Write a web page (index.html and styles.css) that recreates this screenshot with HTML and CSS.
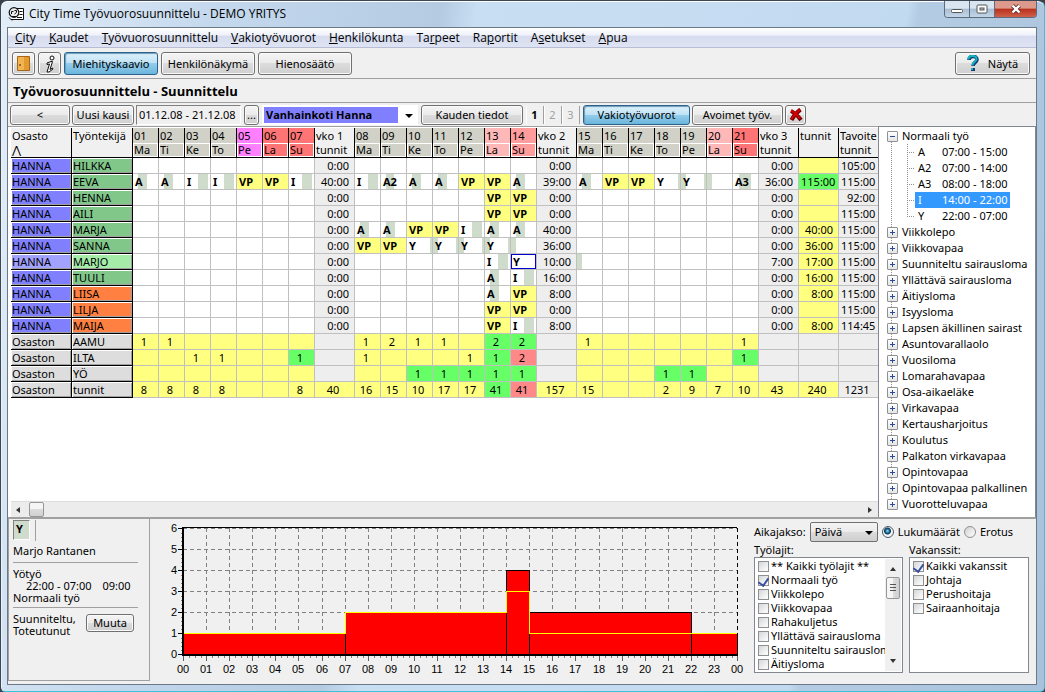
FILE: index.html
```html
<!DOCTYPE html>
<html lang="fi">
<head>
    <meta charset="UTF-8">
    <meta name="viewport" content="width=device-width, initial-scale=1.0">
    <title>City Time Työvuorosuunnittelu - DEMO YRITYS</title>
    <link rel="stylesheet" href="styles.css">
</head>
<body>
<div class="window">
    <header class="titlebar">
        <svg class="app-icon" width="16" height="14" viewBox="0 0 16 14">
            <path d="M8 1.500h7.500v11H3" fill="#fff" stroke="#111"/>
            <circle cx="6" cy="5.500" r="4.800" fill="#eee" stroke="#111" stroke-width="1.200"/>
            <path d="M3.500 7V4.500h2M6.500 3.500h2v2l-2 1.500M4 9.500h4" fill="none" stroke="#111"/>
            <path d="M1 10.500l3 3M11.500 4.500h3M11.500 7.500h3M9 10.500h5" stroke="#111"/>
        </svg>
        <h1>City Time Työvuorosuunnittelu - DEMO YRITYS</h1>
        <div class="window-buttons">
            <button type="button" aria-label="Pienennä"><svg width="12" height="12"><rect x=".5" y="6.500" width="11" height="3" rx="1" fill="#fff" stroke="#555"/></svg></button>
            <button type="button" aria-label="Palauta"><svg width="12" height="12"><rect x="1" y="2" width="10" height="8" rx="1" fill="#fff" stroke="#555"/><rect x="4" y="5" width="4" height="2" fill="#bcd" stroke="#555"/></svg></button>
            <button type="button" class="close" aria-label="Sulje"><svg width="12" height="12"><path d="M2.500 2.500l7 7M9.500 2.500l-7 7" stroke="#5a2a2a" stroke-width="4"/><path d="M2.500 2.500l7 7M9.500 2.500l-7 7" stroke="#fff" stroke-width="2.400"/></svg></button>
        </div>
    </header>

    <div class="client">
        <nav class="menu">
            <a href="#"><u>C</u>ity</a>
            <a href="#"><u>K</u>audet</a>
            <a href="#"><u>T</u>yövuorosuunnittelu</a>
            <a href="#"><u>V</u>akiotyövuorot</a>
            <a href="#"><u>H</u>enkilökunta</a>
            <a href="#">Ta<u>r</u>peet</a>
            <a href="#">Ra<u>p</u>ortit</a>
            <a href="#">A<u>s</u>etukset</a>
            <a href="#"><u>A</u>pua</a>
        </nav>

        <div class="toolbar">
            <button type="button" class="btn icon-btn" aria-label="Poistu">
                <svg width="13" height="16" viewBox="0 0 13 16"><path d="M.500.500h12v14H.500z" fill="#e39a2e" stroke="#a8651a"/><path d="M1 1h6v13H1z" fill="#f0b452"/><circle cx="3" cy="9" r="1" fill="#8a4d10"/></svg>
            </button>
            <button type="button" class="btn icon-btn" aria-label="Tiedot">
                <svg width="12" height="18" viewBox="0 0 12 18"><path d="M3 8l4-1.500h1.500L6 14.500l2.500-1.500.500 1-4 3H3L5.500 9 3 9.500z" fill="#fff" stroke="#111"/><circle cx="8" cy="3" r="2" fill="#fff" stroke="#111"/></svg>
            </button>
            <button type="button" class="btn view-btn active">Miehityskaavio</button>
            <button type="button" class="btn view-btn">Henkilönäkymä</button>
            <button type="button" class="btn view-btn">Hienosäätö</button>
            <button type="button" class="btn help-btn">
                <svg width="12" height="17" viewBox="0 0 12 17"><path d="M2 5c0-5 8-4.500 8-.500 0 3-4 2.500-4 6.500" fill="none" stroke="#123c70" stroke-width="3.600"/><path d="M1.500 4.500c0-5 8-4.500 8-.500 0 3-4 2.500-4 6.500" fill="none" stroke="#11b5c4" stroke-width="2"/><path d="M4 13h4v3H4z" fill="#123c70"/><path d="M4 13h2v2H4z" fill="#11b5c4"/></svg>
                Näytä
            </button>
        </div>

        <h2>Työvuorosuunnittelu - Suunnittelu</h2>

        <div class="controls">
            <button type="button" class="btn prev-btn">&lt;</button>
            <button type="button" class="btn new-btn">Uusi kausi</button>
            <input class="period" type="text" value="01.12.08 - 21.12.08" aria-label="Kausi">
            <button type="button" class="btn dots-btn">...</button>
            <div class="combo unit">
                <select aria-label="Osasto"><option>Vanhainkoti Hanna</option></select>
            </div>
            <button type="button" class="btn info-btn">Kauden tiedot</button>
            <div class="pages">
                <button type="button">1</button>
                <button type="button" disabled>2</button>
                <button type="button" disabled>3</button>
            </div>
            <button type="button" class="btn shifts-btn active">Vakiotyövuorot</button>
            <button type="button" class="btn open-btn">Avoimet työv.</button>
            <button type="button" class="btn delete-btn" aria-label="Poista">
                <svg width="14" height="14" viewBox="0 0 14 14"><path d="M2 3c4 2 7 5 10 9M11.500 1.500C8 4 5 7 2.500 12" fill="none" stroke="#700" stroke-width="4"/><path d="M2 2.500c4 2 6 4 9 8M11 1.500C8 4 5 7 2.500 11" fill="none" stroke="#d40000" stroke-width="2"/></svg>
            </button>
        </div>

        <main class="work">
            <section class="grid-pane">
                <table class="roster">
                    <colgroup id="cols"></colgroup>
                    <thead><tr id="head"></tr></thead>
                    <tbody id="rows"></tbody>
                </table>
                <div class="hscroll">
                    <span class="arrow-left"></span>
                    <span class="thumb"></span>
                    <span class="arrow-right"></span>
                </div>
            </section>
            <aside class="tree">
                <ul>
                    <li class="open"><span class="node">Normaali työ</span>
                        <ul class="shifts">
                            <li><span class="shift"><b>A</b>07:00 - 15:00</span></li>
                            <li><span class="shift"><b>A2</b>07:00 - 14:00</span></li>
                            <li><span class="shift"><b>A3</b>08:00 - 18:00</span></li>
                            <li><span class="shift selected"><b>I</b>14:00 - 22:00</span></li>
                            <li><span class="shift"><b>Y</b>22:00 - 07:00</span></li>
                        </ul>
                    </li>
                    <li><span class="node">Viikkolepo</span></li>
                    <li><span class="node">Viikkovapaa</span></li>
                    <li><span class="node">Suunniteltu sairausloma</span></li>
                    <li><span class="node">Yllättävä sairausloma</span></li>
                    <li><span class="node">Äitiysloma</span></li>
                    <li><span class="node">Isyysloma</span></li>
                    <li><span class="node">Lapsen äkillinen sairast</span></li>
                    <li><span class="node">Asuntovarallaolo</span></li>
                    <li><span class="node">Vuosiloma</span></li>
                    <li><span class="node">Lomarahavapaa</span></li>
                    <li><span class="node">Osa-aikaeläke</span></li>
                    <li><span class="node">Virkavapaa</span></li>
                    <li><span class="node">Kertausharjoitus</span></li>
                    <li><span class="node">Koulutus</span></li>
                    <li><span class="node">Palkaton virkavapaa</span></li>
                    <li><span class="node">Opintovapaa</span></li>
                    <li><span class="node">Opintovapaa palkallinen</span></li>
                    <li><span class="node">Vuorotteluvapaa</span></li>
                </ul>
            </aside>
        </main>

        <footer class="bottom">
            <section class="details">
                <div class="code-row"><span class="code">Y</span></div>
                <p class="person">Marjo Rantanen</p>
                <div class="shift-info">
                    <p>Yötyö</p>
                    <p class="times"><span>22:00 - 07:00</span><span>09:00</span></p>
                    <p>Normaali työ</p>
                </div>
                <div class="state">
                    <p>Suunniteltu,<br>Toteutunut</p>
                    <button type="button" class="btn">Muuta</button>
                </div>
            </section>

            <section class="chart">
                <svg id="chart" width="594" height="160" viewBox="150 520 594 160"></svg>
            </section>

            <section class="filters">
                <div class="range">
                    <label for="span">Aikajakso:</label>
                    <div class="combo span">
                        <select id="span"><option>Päivä</option></select>
                    </div>
                    <label><input type="radio" name="mode" checked>Lukumäärät</label>
                    <label><input type="radio" name="mode">Erotus</label>
                </div>
                <div class="lists">
                    <div class="list-col types">
                        <h3>Työlajit:</h3>
                        <div class="list">
                            <div class="items">
                                <label><input type="checkbox">** Kaikki työlajit **</label>
                                <label><input type="checkbox" checked>Normaali työ</label>
                                <label><input type="checkbox">Viikkolepo</label>
                                <label><input type="checkbox">Viikkovapaa</label>
                                <label><input type="checkbox">Rahakuljetus</label>
                                <label><input type="checkbox">Yllättävä sairausloma</label>
                                <label><input type="checkbox">Suunniteltu sairausloma</label>
                                <label><input type="checkbox">Äitiysloma</label>
                            </div>
                            <div class="vscroll">
                                <span class="arrow-up"></span>
                                <span class="thumb"></span>
                                <span class="arrow-down"></span>
                            </div>
                        </div>
                    </div>
                    <div class="list-col posts">
                        <h3>Vakanssit:</h3>
                        <div class="list">
                            <div class="items">
                                <label><input type="checkbox" checked>Kaikki vakanssit</label>
                                <label><input type="checkbox">Johtaja</label>
                                <label><input type="checkbox">Perushoitaja</label>
                                <label><input type="checkbox">Sairaanhoitaja</label>
                            </div>
                        </div>
                    </div>
                </div>
            </section>
        </footer>
    </div>
</div>
<script src="script.js"></script>
</body>
</html>
```
FILE: styles.css
```css
* {
    box-sizing: border-box;
}
body {
    margin: 0;
    background: #3a3f48;
    font-family: "Noto Sans", "Open Sans", sans-serif;
    font-size: 11px;
    line-height: 14px;
    color: #000;
}
h1, h2, h3, p, ul {
    margin: 0;
    padding: 0;
}
button, input, select {
    font: inherit;
    color: inherit;
    margin: 0;
}
ul {
    list-style: none;
}

/* window frame */
.window {
    display: flex;
    flex-direction: column;
    min-height: 100vh;
    padding: 0 7px 6px 6px;
    border: 1px solid #3c4654;
    border-right-color: #35c4dc;
    border-bottom-color: #35c4dc;
    border-radius: 7px 7px 5px 5px;
    background: linear-gradient(100deg, #e4eef8 0, #c5d9ee 18%, #b4cbe2 38%, #c8def3 41%, #c2daf0 78%, #b4cce3 79%, #a8c2dc 100%);
    box-shadow: inset 0 1px #fff, inset 1px 0 #e8f2fa;
}
.titlebar {
    display: flex;
    align-items: flex-start;
    height: 26px;
}
.app-icon {
    margin: 6px 5px 0 1px;
}
.titlebar h1 {
    flex: 1;
    font-family: "Open Sans", "Noto Sans", sans-serif;
    font-size: 12px;
    font-weight: normal;
    line-height: 26px;
}
.window-buttons {
    display: flex;
    border: 1px solid #5b6b80;
    border-top: 0;
    border-radius: 0 0 4px 4px;
    overflow: hidden;
}
.window-buttons button {
    display: grid;
    place-items: center;
    width: 25px;
    height: 16px;
    padding: 0;
    border: 0;
    border-right: 1px solid #5b6b80;
    background: linear-gradient(#d9e6f2 45%, #a9bed4 50%, #c3d6e8);
}
.window-buttons .close {
    width: 41px;
    border-right: 0;
    background: linear-gradient(#dd9a8c 45%, #b8301c 50%, #d0604a);
}
.client {
    display: flex;
    flex: 1;
    flex-direction: column;
    border: 1px solid #6b7885;
    background: #f0f0f0;
}

/* menu and toolbars */
.menu {
    display: flex;
    gap: 13px;
    height: 20px;
    padding: 0 7px;
    border-bottom: 1px solid #b8bcd4;
    background: linear-gradient(#fff 0, #eef1f9 38%, #d6dcee 42%, #dfe4f4 100%);
    font-family: "Open Sans", "Noto Sans", sans-serif;
    font-size: 12px;
    line-height: 20px;
}
.menu a {
    color: #000;
    text-decoration: none;
}
.btn {
    display: flex;
    align-items: center;
    justify-content: center;
    flex-shrink: 0;
    height: 20px;
    padding: 0;
    border: 1px solid #707070;
    border-radius: 3px;
    background: linear-gradient(#f4f4f4, #ebebeb 48%, #dcdcdc 50%, #cfcfcf);
    box-shadow: inset 0 0 0 1px #fafafa;
    white-space: nowrap;
}
.btn.active {
    border-color: #2c628b;
    background: linear-gradient(#dff1fb, #bfe2f5 48%, #94cdec 50%, #6bb5dc);
    box-shadow: inset 1px 1px 1px #6a9cba;
}
.toolbar {
    display: flex;
    gap: 3px;
    height: 31px;
    padding: 4px 6px 3px 4px;
    border-bottom: 1px solid #a0a0a0;
}
.toolbar .btn {
    height: 23px;
}
.toolbar .icon-btn {
    width: 23px;
}
.view-btn {
    width: 94px;
}
.toolbar .help-btn {
    gap: 9px;
    width: 75px;
    margin-left: auto;
}
h2 {
    height: 24px;
    padding-left: 5px;
    border-bottom: 1px solid #a0a0a0;
    font-family: "Open Sans", "Noto Sans", sans-serif;
    font-size: 13px;
    line-height: 24px;
}
.controls {
    display: flex;
    align-items: center;
    gap: 2px;
    height: 23px;
    padding-left: 2px;
}
.prev-btn {
    width: 60px;
}
.new-btn {
    width: 62px;
}
.period {
    width: 105px;
    height: 20px;
    margin-right: 1px;
    padding: 0 2px;
    border: 1px solid #fff;
    border-top-color: #808080;
    border-left-color: #808080;
    background: #f0f0f0;
}
.dots-btn {
    width: 15px;
}
.combo {
    position: relative;
}
.combo select {
    appearance: none;
    width: 100%;
    height: 20px;
    padding: 0 4px;
    border: 0;
    border-radius: 0;
}
.combo::after {
    content: "";
    position: absolute;
    top: 9px;
    right: 5px;
    border: 4px solid transparent;
    border-top-color: #000;
    border-bottom: 0;
    pointer-events: none;
}
.unit {
    width: 156px;
    margin: 0 1px;
}
.unit select {
    background: linear-gradient(#8080ff, #8080ff) 2px 2px / calc(100% - 22px) 16px no-repeat #fff;
    font-family: "Open Sans", "Noto Sans", sans-serif;
    font-weight: bold;
}
.info-btn {
    width: 102px;
}
.pages {
    display: flex;
    margin: 0 1px;
}
.pages button {
    width: 18px;
    height: 18px;
    padding: 0;
    border: 0;
    border-right: 1px solid #a0a0a0;
    background: none;
    box-shadow: inset 1px 0 #fff;
    font-weight: bold;
}
.pages button:disabled {
    color: #a0a0a0;
    font-weight: normal;
}
.shifts-btn {
    width: 107px;
}
.open-btn {
    width: 91px;
}
.delete-btn {
    width: 21px;
}

/* roster */
.work {
    display: flex;
    flex: 1;
    min-height: 0;
}
.grid-pane {
    display: flex;
    flex: 1;
    flex-direction: column;
    min-width: 0;
    padding: 1px 0 0 3px;
    border-top: 1px solid #a0a0a0;
    background: #fff;
    overflow: hidden;
}
.roster {
    width: 868px;
    table-layout: fixed;
    border-spacing: 0;
    line-height: 15px;
    white-space: nowrap;
}
.roster th, .roster td {
    height: 16px;
    padding: 0 2px;
    border-right: 1px solid #c0c0c0;
    border-bottom: 1px solid #c0c0c0;
    overflow: hidden;
    text-align: left;
    font-weight: normal;
}
.roster thead th {
    height: 30px;
    padding: 0;
    border-color: #000;
    background: #f0f0f0;
    line-height: 14px;
    vertical-align: top;
}
.roster thead span {
    display: block;
    height: 15px;
    padding: 1px 1px 0;
}
.roster thead span + span {
    height: 14px;
    padding-top: 0;
}
.roster thead .day span + span {
    padding: 0;
    border: 1px solid #fff;
    line-height: 12px;
}
.roster .work-day {
    background: #d1d1c7;
}
.roster .holiday-eve {
    background: #ff80ff;
}
.roster .red-day {
    background: #ff7474;
}
.roster .sat {
    background: #ffb8b8;
}
.roster .sun {
    background: #ff9c9c;
}
.roster tbody th {
    padding: 0 1px;
    border-color: #000;
    background: #ddd;
    box-shadow: inset 1px 1px #fff, inset -1px -1px #a0a0a0;
}
.roster tbody .unit-cell {
    background: #8080ff;
}
.roster tbody .staff {
    background: #82c78a;
}
.roster tbody .temp {
    background: #ff8040;
}
.roster .current .unit-cell {
    background: #a2a2ff;
}
.roster .current .staff {
    background: #a4eca8;
}
.roster .code-cell {
    font-weight: bold;
}
.roster .shift-a {
    background: linear-gradient(#d0dccb, #d0dccb) 5px 0 / 9px 100% no-repeat;
}
.roster .shift-a2 {
    background: linear-gradient(#d0dccb, #d0dccb) 5px 0 / 8px 100% no-repeat;
}
.roster .shift-a3 {
    background: linear-gradient(#d0dccb, #d0dccb) 6px 0 / 12px 100% no-repeat;
}
.roster .shift-i {
    background: linear-gradient(#d0dccb, #d0dccb) 13px 0 / 10px 100% no-repeat;
}
.roster .shift-y {
    background: linear-gradient(#d0dccb, #d0dccb) right 0 top 0 / 2px 100% no-repeat;
}
.roster .after-y {
    background: linear-gradient(#d0dccb, #d0dccb) 0 0 / 5px 100% no-repeat;
}
.roster .shift-y.after-y {
    background: linear-gradient(90deg, #d0dccb 5px, transparent 5px, transparent calc(100% - 2px), #d0dccb calc(100% - 2px));
}
.roster .yellow {
    background: #ffff80;
}
.roster .green {
    background: #66ff66;
}
.roster .red {
    background: #ff8888;
}
.roster .cursor {
    background: #fff;
    box-shadow: inset 0 0 0 1px #0000d0;
}
.roster .sum {
    background-color: #eee;
    padding-right: 5px;
    text-align: right;
}
.roster .sum.yellow {
    background-color: #ffff80;
}
.roster .sum.green {
    background-color: #66ff66;
}
.roster .goal {
    padding-right: 4px;
    border-right: 0;
}
.roster .count {
    padding: 0 3px 0 0;
    text-align: center;
}
.hscroll {
    display: flex;
    align-items: center;
    height: 16px;
    margin-top: auto;
    padding: 0 6px 0 5px;
    border-top: 1px solid #ddd;
    background: #ececec;
}
.hscroll .thumb {
    width: 15px;
    height: 15px;
    margin: 0 auto 0 9px;
    border: 1px solid #979797;
    border-radius: 2px;
    background: linear-gradient(#f5f5f5 48%, #dcdcdc 50%, #d0d0d0);
}
.arrow-left, .arrow-right, .arrow-up, .arrow-down {
    border: 3px solid transparent;
}
.arrow-left {
    border-right: 4px solid #333;
    border-left: 0;
}
.arrow-right {
    border-left: 4px solid #333;
    border-right: 0;
}
.arrow-up {
    border-bottom: 4px solid #333;
    border-top: 0;
}
.arrow-down {
    border-top: 4px solid #333;
    border-bottom: 0;
}

/* absence tree */
.tree {
    width: 158px;
    flex-shrink: 0;
    padding: 1px 0 0 8px;
    border: 1px solid #828790;
    border-width: 1px 1px 0 1px;
    background: #fff;
    overflow: hidden;
}
.tree li {
    line-height: 16px;
    white-space: nowrap;
}
.node {
    display: flex;
    align-items: center;
    height: 16px;
}
.node::before {
    content: "";
    width: 9px;
    height: 9px;
    margin-right: 4px;
    border: 1px solid #919191;
    border-radius: 1px;
    background:
        linear-gradient(#2b4a9b, #2b4a9b) center / 5px 1px no-repeat,
        linear-gradient(#2b4a9b, #2b4a9b) center / 1px 5px no-repeat,
        linear-gradient(#fff, #e4e4e4);
}
.open > .node::before {
    background: linear-gradient(#2b4a9b, #2b4a9b) center / 5px 1px no-repeat, linear-gradient(#fff, #e4e4e4);
}
.tree > ul > li {
    background: repeating-linear-gradient(#909090 0 1px, transparent 1px 2px) 4px 0 / 1px 100% no-repeat;
}
.tree > ul > li:first-child {
    background-position: 4px 8px;
}
.tree > ul > li:last-child {
    background-size: 1px 8px;
}
.shifts li {
    display: flex;
    height: 16px;
    padding-left: 28px;
    background:
        repeating-linear-gradient(#909090 0 1px, transparent 1px 2px) 20px 0 / 1px 100% no-repeat,
        repeating-linear-gradient(90deg, #909090 0 1px, transparent 1px 2px) 20px 8px / 7px 1px no-repeat;
}
.shifts li:last-child {
    background-size: 1px 8px, 7px 1px;
}
.shift {
    display: flex;
    padding: 0 2px 0 3px;
}
.shift b {
    width: 24px;
    font-weight: normal;
}
.shift.selected {
    background: #3399ff;
    color: #fff;
}

/* bottom panel */
.bottom {
    display: flex;
    height: 167px;
    border-top: 2px solid #a0a0a0;
}
.details {
    width: 142px;
    margin-bottom: 3px;
    padding: 1px 11px 0 4px;
    border: 1px solid #a0a0a0;
    border-top: 0;
    line-height: 12px;
}
.code-row {
    display: flex;
    height: 21px;
}
.code {
    width: 17px;
    height: 20px;
    padding: 2px;
    border: 1px solid #fff;
    border-top-color: #808080;
    border-left-color: #808080;
    background: #d0dccb;
    font-weight: bold;
}
.code-row::after {
    content: "";
    margin-left: 5px;
    border-left: 1px solid #a0a0a0;
}
.person {
    padding: 4px 0 5px;
    border-bottom: 1px solid #a0a0a0;
}
.shift-info {
    padding: 5px 0 3px;
    border-bottom: 1px solid #a0a0a0;
}
.times {
    display: flex;
    gap: 11px;
    padding-left: 13px;
}
.state {
    display: flex;
    justify-content: space-between;
    padding: 5px 4px 0 0;
}
.state .btn {
    width: 48px;
    height: 18px;
    margin-top: 1px;
}
.chart {
    flex: 1;
    min-width: 0;
    padding-top: 1px;
    overflow: hidden;
}
#chart {
    display: block;
    font-size: 11px;
    font-family: "Liberation Sans", Arial, sans-serif;
}
.filters {
    width: 282px;
    flex-shrink: 0;
}
.range {
    display: flex;
    align-items: center;
    height: 25px;
}
.range label {
    display: flex;
    align-items: center;
    margin-right: 4px;
}
.span {
    width: 68px;
    margin-right: 4px;
}
.span select {
    border: 1px solid #707070;
    border-radius: 2px;
    background: linear-gradient(#f4f4f4, #ebebeb 48%, #dcdcdc 50%, #cfcfcf);
}
input[type="radio"] {
    appearance: none;
    width: 12px;
    height: 12px;
    margin-right: 4px;
    border: 1px solid #8e8f8f;
    border-radius: 50%;
    background: linear-gradient(135deg, #d0d0d0, #fff);
}
input[type="radio"]:checked {
    border-color: #4a5a68;
    background: radial-gradient(circle at 45% 40%, #8ee0f8 0, #1a6a9a 2px, #0c3350 3px, #f4f4f4 4px);
}
.lists {
    display: flex;
    gap: 6px;
}
.types {
    width: 149px;
}
.posts {
    width: 120px;
}
h3 {
    height: 13px;
    font-size: 11px;
    font-weight: normal;
    line-height: 11px;
}
.list {
    display: flex;
    height: 116px;
    padding: 1px;
    border: 1px solid #828790;
    background: #fff;
    overflow: hidden;
}
.items {
    flex: 1;
    min-width: 0;
    padding-left: 2px;
    overflow: hidden;
}
.items label {
    display: flex;
    align-items: center;
    height: 14px;
    white-space: nowrap;
}
input[type="checkbox"] {
    appearance: none;
    display: grid;
    justify-items: center;
    align-items: start;
    flex-shrink: 0;
    width: 11px;
    height: 11px;
    margin-right: 2px;
    border: 1px solid #8e8f8f;
    background: linear-gradient(135deg, #d4d6d8, #f8f8f8 80%);
}
input[type="checkbox"]:checked::before {
    content: "";
    width: 5px;
    height: 8px;
    border: solid #3a4fa0;
    border-width: 0 2px 2px 0;
    transform: rotate(35deg);
}
.vscroll {
    display: flex;
    flex-direction: column;
    align-items: center;
    width: 16px;
    padding: 8px 0;
    background: #f0f0f0;
}
.vscroll .thumb {
    width: 14px;
    height: 22px;
    margin: 6px 0 auto;
    border: 1px solid #979797;
    border-radius: 2px;
    background:
        repeating-linear-gradient(#555 0 1px, transparent 1px 3px) center / 6px 8px no-repeat,
        linear-gradient(90deg, #f5f5f5 48%, #dcdcdc 50%, #d0d0d0);
}
```
FILE: script.js
```javascript
const dayNames = ["Ma", "Ti", "Ke", "To", "Pe", "La", "Su"];
const dayStyles = {
    5: "holiday-eve", 6: "red-day", 7: "red-day",
    13: "sat", 14: "sun", 20: "sat", 21: "red-day"
};

// shifts: day number -> code, sums: three weeks, total, target
const people = [
    { name: "HILKKA", kind: "staff", shifts: {}, sums: ["0:00", "0:00", "0:00", "", "105:00"] },
    { name: "EEVA", kind: "staff", full: true, shifts: { 1: "A", 2: "A", 3: "I", 4: "I", 5: "VP", 6: "VP", 7: "I", 8: "I", 9: "A2", 10: "A", 11: "A", 12: "VP", 13: "VP", 14: "A", 15: "A", 16: "VP", 17: "VP", 18: "Y", 19: "Y", 21: "A3" }, sums: ["40:00", "39:00", "36:00", "115:00", "115:00"] },
    { name: "HENNA", kind: "staff", shifts: { 13: "VP", 14: "VP" }, sums: ["0:00", "0:00", "0:00", "", "92:00"] },
    { name: "AILI", kind: "staff", shifts: { 13: "VP", 14: "VP" }, sums: ["0:00", "0:00", "0:00", "", "115:00"] },
    { name: "MARJA", kind: "staff", shifts: { 8: "A", 9: "A", 10: "VP", 11: "VP", 12: "I", 13: "A", 14: "A" }, sums: ["0:00", "40:00", "0:00", "40:00", "115:00"] },
    { name: "SANNA", kind: "staff", shifts: { 8: "VP", 9: "VP", 10: "Y", 11: "Y", 12: "Y", 13: "Y" }, sums: ["0:00", "36:00", "0:00", "36:00", "115:00"] },
    { name: "MARJO", kind: "staff", current: 14, shifts: { 13: "I", 14: "Y" }, sums: ["0:00", "10:00", "7:00", "17:00", "115:00"] },
    { name: "TUULI", kind: "staff", shifts: { 13: "A", 14: "I" }, sums: ["0:00", "16:00", "0:00", "16:00", "115:00"] },
    { name: "LIISA", kind: "temp", shifts: { 13: "A", 14: "VP" }, sums: ["0:00", "8:00", "0:00", "8:00", "115:00"] },
    { name: "LILJA", kind: "temp", shifts: { 13: "VP", 14: "VP" }, sums: ["0:00", "0:00", "0:00", "", "115:00"] },
    { name: "MAIJA", kind: "temp", shifts: { 13: "VP", 14: "I" }, sums: ["0:00", "8:00", "0:00", "8:00", "114:45"] }
];

const totals = [
    { name: "AAMU", counts: { 1: 1, 2: 1, 8: 1, 9: 2, 10: 1, 11: 1, 13: 2, 14: 2, 15: 1, 21: 1 }, green: [13, 14], red: [] },
    { name: "ILTA", counts: { 3: 1, 4: 1, 7: 1, 8: 1, 12: 1, 13: 1, 14: 2, 21: 1 }, green: [7, 13, 21], red: [14] },
    { name: "YÖ", counts: { 10: 1, 11: 1, 12: 1, 13: 1, 14: 1, 18: 1, 19: 1 }, green: [10, 11, 12, 13, 14, 18, 19], red: [] },
    { name: "tunnit", counts: { 1: 8, 2: 8, 3: 8, 4: 8, 7: 8, 8: 16, 9: 15, 10: 10, 11: 17, 12: 17, 13: 41, 14: 41, 15: 15, 18: 2, 19: 9, 20: 7, 21: 10 }, green: [13], red: [14], sums: [40, 157, 43, 240, 1231] }
];

const pad = n => String(n).padStart(2, "0");

// runs day() for each day and week() after each full week
function eachColumn(day, week) {
    let html = "";
    for (let d = 1; d <= 21; d++) {
        html += day(d);
        if (d % 7 === 0) html += week(d / 7 - 1);
    }
    return html;
}

function buildHead() {
    document.getElementById("cols").innerHTML = '<col width="61"><col width="61">' +
        eachColumn(() => '<col width="26">', () => '<col width="40">') +
        '<col width="40"><col width="40">';
    document.getElementById("head").innerHTML =
        "<th><span>Osasto</span><span>⋀</span></th><th><span>Työntekijä</span></th>" +
        eachColumn(
            d => `<th class="day ${dayStyles[d] || "work-day"}"><span>${pad(d)}</span><span>${dayNames[(d - 1) % 7]}</span></th>`,
            w => `<th><span>vko ${w + 1}</span><span>tunnit</span></th>`
        ) +
        "<th><span>tunnit</span></th><th><span>Tavoite</span><span>tunnit</span></th>";
}

function shiftCell(p, d) {
    const code = p.shifts[d] || "";
    const cls = ["code-cell"];
    if (code === "VP") cls.push("yellow");
    else if (code) cls.push("shift-" + code.toLowerCase());
    if (p.shifts[d - 1] === "Y") cls.push("after-y");
    if (p.current === d) cls.push("cursor");
    return `<td class="${cls.join(" ")}">${code}</td>`;
}

function personRow(p) {
    return `<tr class="${p.current ? "current" : ""}"><th class="unit-cell">HANNA</th><th class="${p.kind}">${p.name}</th>` +
        eachColumn(d => shiftCell(p, d), w => `<td class="sum">${p.sums[w]}</td>`) +
        `<td class="sum ${p.full ? "green" : "yellow"}">${p.sums[3]}</td><td class="sum goal">${p.sums[4]}</td></tr>`;
}

function totalRow(t) {
    const color = d => t.green.includes(d) ? "green" : t.red.includes(d) ? "red" : "yellow";
    const sum = i => t.sums
        ? `<td class="sum count ${i < 4 ? "yellow" : ""}">${t.sums[i]}</td>`
        : '<td class="sum"></td>';
    return `<tr><th>Osaston</th><th>${t.name}</th>` +
        eachColumn(d => `<td class="count ${color(d)}">${t.counts[d] || ""}</td>`, sum) +
        sum(3) + sum(4) + "</tr>";
}

function buildChart() {
    const left = 183, bottom = 654;
    const x = h => left + Math.round(h * 554 / 24);
    const y = n => bottom - n * 21;
    const line = (x1, y1, x2, y2, color, extra = "") =>
        `<path d="M${x1} ${y1}L${x2} ${y2}" stroke="${color}" fill="none" ${extra}/>`;
    const dash = 'stroke-dasharray="4 3"';
    let out = "";

    for (let n = 0; n <= 6; n++) {
        out += line(left, y(n), x(24), y(n), "#808080", dash);
        out += line(left - 5, y(n), left, y(n), "#000");
        out += `<text x="${left - 6}" y="${y(n) + 4}" text-anchor="end">${n}</text>`;
        if (n < 6) for (let i = 1; i < 5; i++) out += line(left - 2, y(n) - i * 4, left, y(n) - i * 4, "#808080");
    }
    for (let h = 0; h <= 24; h++) {
        out += line(x(h), y(6), x(h), bottom, h === 24 ? "#000" : "#808080", dash);
        out += line(x(h), bottom + 2, x(h), bottom + 7, "#606060");
        out += `<text x="${x(h)}" y="673" text-anchor="middle">${pad(h % 24)}</text>`;
        if (h < 24) for (let i = 1; i < 4; i++) out += line(x(h) + i * 6, bottom + 2, x(h) + i * 6, bottom + 4, "#808080");
    }

    // staffing as filled steps: from hour, to hour, people
    [[0, 7, 1], [7, 14, 2], [14, 15, 4], [15, 22, 2], [22, 24, 1]].forEach(([a, b, n]) => {
        out += `<rect x="${x(a)}" y="${y(n)}" width="${x(b) - x(a)}" height="${n * 21 + 1}" fill="#f00" stroke="#000"/>`;
    });
    out += `<path d="M${x(0)} ${y(1)}H${x(7)}V${y(2)}H${x(14)}V${y(3)}H${x(15)}V${y(1)}H${x(24)}" fill="none" stroke="#ff0"/>`;
    out += line(left, y(6) - 1, x(24), y(6) - 1, "#000");
    out += line(left, y(6) - 1, left, bottom + 2, "#000", 'stroke-width="2"');
    out += line(left, bottom + 1, x(24), bottom + 1, "#000", 'stroke-width="2"');

    const chart = document.getElementById("chart");
    chart.setAttribute("shape-rendering", "crispEdges");
    chart.innerHTML = out;
}

buildHead();
document.getElementById("rows").innerHTML = people.map(personRow).join("") + totals.map(totalRow).join("");
buildChart();
```
